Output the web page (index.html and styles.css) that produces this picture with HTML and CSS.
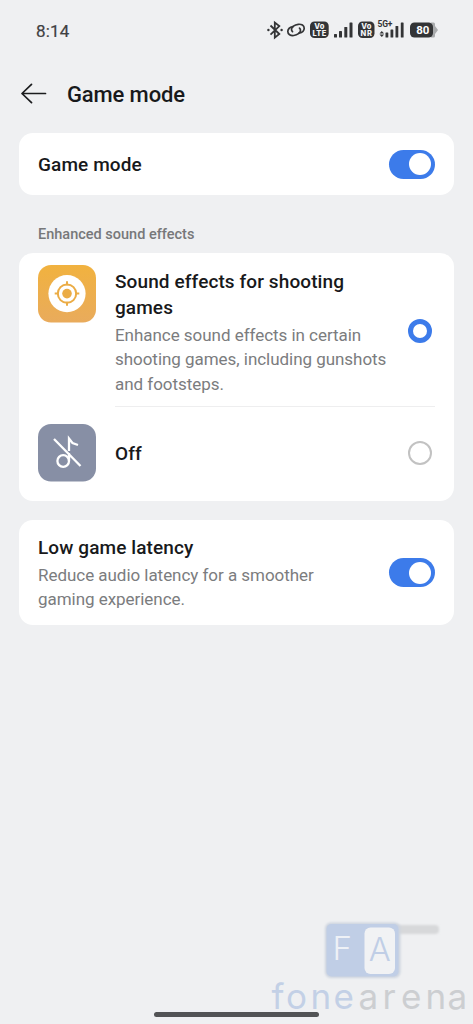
FILE: index.html
```html
<!DOCTYPE html>
<html lang="en">
<head>
<meta charset="utf-8">
<title>Game mode</title>
<link rel="stylesheet" href="styles.css">
</head>
<body>
<div class="screen">
  <div class="status">
    <span class="clock">8:14</span>
    <svg class="status-icons" width="172" height="26" viewBox="266 17 172 26">
      <g fill="none" stroke="#333436" stroke-width="1.8">
        <path d="M270.5 25.500l8.800 8.500-4.500 3.600v-15l4.500 3.500-8.800 8.500"/>
        <g stroke-linecap="round" stroke-width="1.700">
          <path d="M293 26.600c-3 .6-5.200 2.600-5.200 5 0 2.700 2.700 4.300 6 3.900 3.700-.4 6.700-2.700 6.700-5.300 0-.9-.4-1.600-1-2.100"/>
          <path d="M299 33.200c3-.6 5.200-2.600 5.200-5 0-2.700-2.700-4.300-6-3.900-3.700.4-6.700 2.700-6.700 5.300 0 .9.400 1.600 1 2.100"/>
        </g>
      </g>
      <g fill="#333436">
        <circle cx="268.400" cy="30" r="1.200"/><circle cx="281.600" cy="30" r="1.200"/>
        <rect x="310" y="21.500" width="18.700" height="16.500" rx="4.500"/>
        <rect x="334" y="34" width="3" height="3.500" rx=".6"/>
        <rect x="339" y="31" width="3" height="6.500" rx=".6"/>
        <rect x="344.300" y="27" width="3" height="10.500" rx=".6"/>
        <rect x="349.500" y="22.500" width="3" height="15" rx=".6"/>
        <rect x="358" y="21.500" width="16.500" height="16.500" rx="4.500"/>
        <path d="M379.500 33.500l2.300-2.600 2.300 2.600zM379.500 34.500l2.300 2.600 2.300-2.600z"/>
        <rect x="385.500" y="32.500" width="2.800" height="5" rx=".6"/>
        <rect x="390.500" y="29.500" width="2.800" height="8" rx=".6"/>
        <rect x="395.500" y="26" width="2.800" height="11.500" rx=".6"/>
        <rect x="400.800" y="22.500" width="2.800" height="15" rx=".6"/>
        <path fill="#a9abad" d="M431 22.500h2.500q1.500 0 1.500 1.500v2l3 4-3 4v2q0 1.500-1.500 1.500h-2.500z"/>
        <rect x="410" y="22.500" width="23" height="15" rx="4.500"/>
      </g>
      <g class="badge-text" text-anchor="middle">
        <text x="319.300" y="29.300" textLength="10">Vo</text><text x="319.400" y="36.300" textLength="14">LTE</text>
        <text x="366.300" y="29.300" textLength="10">Vo</text><text x="366.300" y="36.300" textLength="11.500">NR</text>
      </g>
      <text class="net-text" x="377.500" y="27" textLength="15">5G+</text>
      <text class="battery-text" x="422.800" y="34" text-anchor="middle">80</text>
    </svg>
  </div>

  <header class="topbar">
    <svg width="26" height="22" viewBox="0 0 26 22" fill="none" stroke="#1b1c1e" stroke-width="1.700" stroke-linecap="round" stroke-linejoin="round"><path d="M24.500 10.500H1M10.500 1.300L1 10.500l9.500 9.200"/></svg>
    <h1>Game mode</h1>
  </header>

  <section class="card single">
    <h2>Game mode</h2>
    <span class="switch"></span>
  </section>

  <p class="section-label">Enhanced sound effects</p>

  <section class="card options">
    <div class="option">
      <svg class="tile" width="58" height="58" viewBox="0 0 58 58">
        <defs><linearGradient id="amber" x2="0" y2="1"><stop stop-color="#f1b23f"/><stop offset="1" stop-color="#e9ab5c"/></linearGradient></defs>
        <rect width="58" height="57.500" rx="13" fill="url(#amber)"/>
        <circle cx="29" cy="28.600" r="18.600" fill="#fff"/>
        <g fill="none" stroke="#ebac45" stroke-width="2"><circle cx="29" cy="28.600" r="9.200"/><path d="M29 16.300v4M29 36.800v4M16.700 28.600h4M37.300 28.600h4"/></g>
        <circle cx="29" cy="28.600" r="4.800" fill="#ebac45"/>
      </svg>
      <div class="copy">
        <h2>Sound effects for shooting games</h2>
        <p>Enhance sound effects in certain shooting games, including gunshots and footsteps.</p>
      </div>
      <span class="radio selected"></span>
    </div>
    <div class="option off">
      <svg class="tile" width="58" height="58" viewBox="0 0 58 58">
        <rect width="58" height="57.500" rx="13" fill="#878fa5"/>
        <g fill="none" stroke="#fff" stroke-width="2.300"><circle cx="25.200" cy="37" r="5.800"/><path d="M31 37V29M31 27V14.500l3.500 4.500 5.500 2M16 15l26.500 27"/></g>
      </svg>
      <h2>Off</h2>
      <span class="radio"></span>
    </div>
  </section>

  <section class="card latency">
    <div class="copy">
      <h2>Low game latency</h2>
      <p>Reduce audio latency for a smoother gaming experience.</p>
    </div>
    <span class="switch"></span>
  </section>

  <svg class="watermark" width="213" height="114" viewBox="260 910 213 114">
    <defs><filter id="soft" x="-20%" y="-50%" width="140%" height="200%"><feGaussianBlur stdDeviation=".8"/></filter></defs>
    <rect x="392" y="925" width="47" height="9" rx="4" fill="#d7d8da" filter="url(#soft)"/>
    <rect x="325" y="922.500" width="75.500" height="55.500" rx="6" fill="#cdd4df" filter="url(#soft)"/>
    <rect x="326.500" y="924" width="72" height="52.500" rx="5" fill="#c0cee6"/>
    <rect x="364.500" y="927.500" width="30.500" height="46.500" rx="6" fill="#f1f2f4"/>
    <text class="mark" x="332.500" y="959.500" font-size="33" fill="#eef1f6">F</text>
    <text class="mark" x="368.800" y="960.500" font-size="33" fill="#c0cee6" textLength="22" lengthAdjust="spacingAndGlyphs">A</text>
    <g class="mark wordmark" font-size="35">
      <text x="271.500 286 310.500 333.500" y="1009" fill="#c3d0e6">fone</text>
      <text x="358.500 382.500 401 425.500 447.500" y="1009" fill="#ccced1">arena</text>
    </g>
  </svg>
  <div class="home-bar"></div>
</div>
</body>
</html>
```
FILE: styles.css
```css
* { box-sizing: border-box; }
body { margin: 0; background: #eff0f2; font-family: Roboto, "Noto Sans", sans-serif; color: #18191b; }
h1, h2, p { margin: 0; }
svg { flex: none; display: block; }
.screen { position: relative; width: 473px; height: 1024px; padding: 0 19px; overflow: hidden; }
.status { height: 60px; padding: 17px 16px 0 17px; display: flex; justify-content: space-between; align-items: flex-start; }
.clock { font-size: 17px; line-height: 28px; letter-spacing: .2px; color: #3f4042; -webkit-text-stroke: .2px #3f4042; }
.badge-text { font: 800 7.5px Inter, Roboto, sans-serif; fill: #f4f5f6; }
.net-text { font: 700 8.5px Roboto, sans-serif; fill: #333436; }
.battery-text { font: 700 11.5px Roboto, sans-serif; fill: #fff; }
.topbar { height: 73px; padding: 0 0 5px 2px; display: flex; align-items: center; gap: 20px; }
h1 { padding-top: 1px; font-size: 22px; line-height: 28px; font-weight: 500; letter-spacing: -.13px; }
h2 { font-size: 19px; line-height: 26.500px; font-weight: 500; letter-spacing: .1px; }
.card { background: #fff; border-radius: 14px; }
.single { height: 62px; padding: 0 19px; display: flex; justify-content: space-between; align-items: center; }
.single h2, .off h2 { padding-top: 2px; }
.switch { flex: none; width: 46px; height: 29px; padding: 3.500px 4px; border-radius: 15px; background: #3c7bea; display: flex; justify-content: flex-end; }
.switch::after { content: ""; width: 22px; height: 22px; border-radius: 50%; background: #fff; }
.section-label { height: 58px; padding: 30px 19px 0; font-size: 14.500px; line-height: 20px; font-weight: 500; color: #77787a; }
.options { height: 248px; padding: 12px 19px 0; }
.option { position: relative; display: flex; height: 142px; }
.option .copy { width: 277px; margin-left: 19px; padding-top: 3.500px; }
.copy p { padding-top: 1px; font-size: 17px; line-height: 24.500px; color: #7b7c7e; letter-spacing: -.04px; }
.radio { flex: none; width: 24px; height: 24px; margin: 54px 3px 0 auto; border: 2px solid #c2c2c2; border-radius: 50%; }
.radio.selected { border: 5px solid #3c7bea; }
.option.off { height: 94px; align-items: center; padding-bottom: 3px; }
.off::before { content: ""; position: absolute; top: -1px; left: 77px; right: 0; height: 1px; background: #eeeeef; }
.off h2 { margin-left: 19px; padding-top: 3px; }
.off .radio { margin-top: 0; }
.latency { height: 105px; margin-top: 19px; padding: 2px 19px 0; display: flex; align-items: center; justify-content: space-between; }
.latency .copy { width: 300px; }
.latency .switch { margin-bottom: 2px; }
.watermark { position: absolute; left: 260px; top: 910px; }
.mark { font-family: Inter, "Open Sans", sans-serif; font-weight: 300; }
.wordmark { font-weight: 400; }
.home-bar { position: absolute; left: 154px; top: 1012px; width: 165px; height: 5px; border-radius: 3px; background: #525355; }
```
